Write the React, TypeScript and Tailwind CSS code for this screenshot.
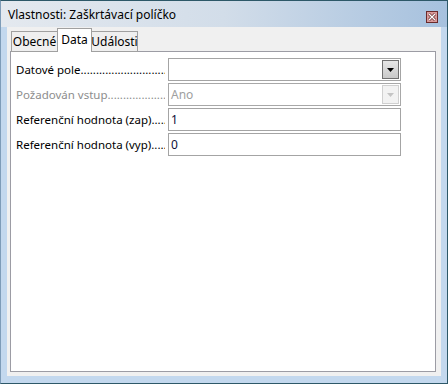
import React from "react";

const DOTS = ".".repeat(80);

function Label({ text, disabled }: { text: string; disabled?: boolean }) {
  return (
    <div
      className={`flex w-[151px] shrink-0 overflow-hidden whitespace-nowrap pr-[2px] text-[11.5px] leading-[16px] ${
        disabled ? "text-[#8d8d8d]" : "text-black"
      }`}
    >
      <span>{text}</span>
      <span className="flex-1 overflow-hidden">{DOTS}</span>
    </div>
  );
}

function DropButton({ disabled }: { disabled?: boolean }) {
  return (
    <div
      className={`flex h-[19px] w-[17px] items-center justify-center border ${
        disabled
          ? "border-[#d0d0d0] bg-[#f2f2f2]"
          : "border-[#707070] bg-gradient-to-b from-[#e6e6e6] to-[#c9c9c9]"
      }`}
    >
      <svg width="7" height="4" viewBox="0 0 7 4">
        <path d="M0 0h7L3.5 4z" fill={disabled ? "#c4c4c4" : "#000"} />
      </svg>
    </div>
  );
}

function Field({ value, select, disabled }: { value: string; select?: boolean; disabled?: boolean }) {
  return (
    <div
      className={`ml-[1px] flex h-[23px] w-[233px] items-center border pl-[2px] pr-[1px] ${
        disabled ? "border-[#a8a8a8] bg-white" : "border-[#a4a4a4] bg-white"
      }`}
    >
      <span className={`flex-1 ${disabled ? "text-[#a0a0a0]" : "text-[#10103a]"}`}>{value}</span>
      {select && <DropButton disabled={disabled} />}
    </div>
  );
}

const rows = [
  { label: "Datové pole", value: "", select: true },
  { label: "Požadován vstup", value: "Ano", select: true, disabled: true },
  { label: "Referenční hodnota (zap)", value: "1" },
  { label: "Referenční hodnota (vyp)", value: "0" },
];

export default function App() {
  return (
    <div
      className="flex h-[384px] w-[448px] flex-col border border-[#2d5868] border-l-[#7e9cb8] text-[12px] leading-none"
      style={{ fontFamily: '"Noto Sans", "Open Sans", sans-serif' }}
    >
      {/* title bar */}
      <div className="flex h-[26px] shrink-0 items-center bg-gradient-to-r from-[#e4e9ef] via-[#d2dde9] to-[#a6c1de] pl-[7px] pr-[9px]">
        <span className="flex-1 pt-[1px] text-[12px] text-black">Vlastnosti: Zaškrtávací políčko</span>
        <div className="mt-[6px] flex h-[12px] w-[12px] items-center justify-center border border-[#6a2a2a] bg-[#d99a9a]">
          <svg width="8" height="8" viewBox="0 0 8 8">
            <path d="M1 1l6 6M7 1L1 7" stroke="#5a2020" strokeWidth="2.6" />
            <path d="M1 1l6 6M7 1L1 7" stroke="#fff" strokeWidth="1.4" />
          </svg>
        </div>
      </div>

      {/* frame */}
      <div className="flex flex-1 flex-col bg-[#c3d8ee] pb-[7px] pl-[6px] pr-[6px]">
        <div className="flex flex-1 flex-col bg-[#f0f0f0] pb-[4px] pl-[3px] pr-[5px] pt-[1px]">
          {/* tabs */}
          <div className="relative z-10 -mb-px flex h-[24px] items-end pl-[1px]">
            <div className="flex h-[21px] w-[47px] items-center justify-center border border-[#a0a0a0] bg-[#efefef] pt-[1px]">
              Obecné
            </div>
            <div className="-ml-[1px] flex h-[24px] w-[35px] items-center justify-center border border-b-0 border-[#a0a0a0] bg-white pb-[2px]">
              Data
            </div>
            <div className="-ml-[1px] flex h-[21px] w-[47px] items-center justify-center border border-[#a0a0a0] bg-[#efefef] pt-[1px]">
              Události
            </div>
          </div>

          {/* panel */}
          <div className="flex flex-1 flex-col gap-[2px] border border-[#9c9ca4] bg-white pl-[5px] pt-[6px]">
            {rows.map((r) => (
              <div key={r.label} className="flex items-center">
                <Label text={r.label} disabled={r.disabled} />
                <Field value={r.value} select={r.select} disabled={r.disabled} />
              </div>
            ))}
          </div>
        </div>
      </div>
    </div>
  );
}
